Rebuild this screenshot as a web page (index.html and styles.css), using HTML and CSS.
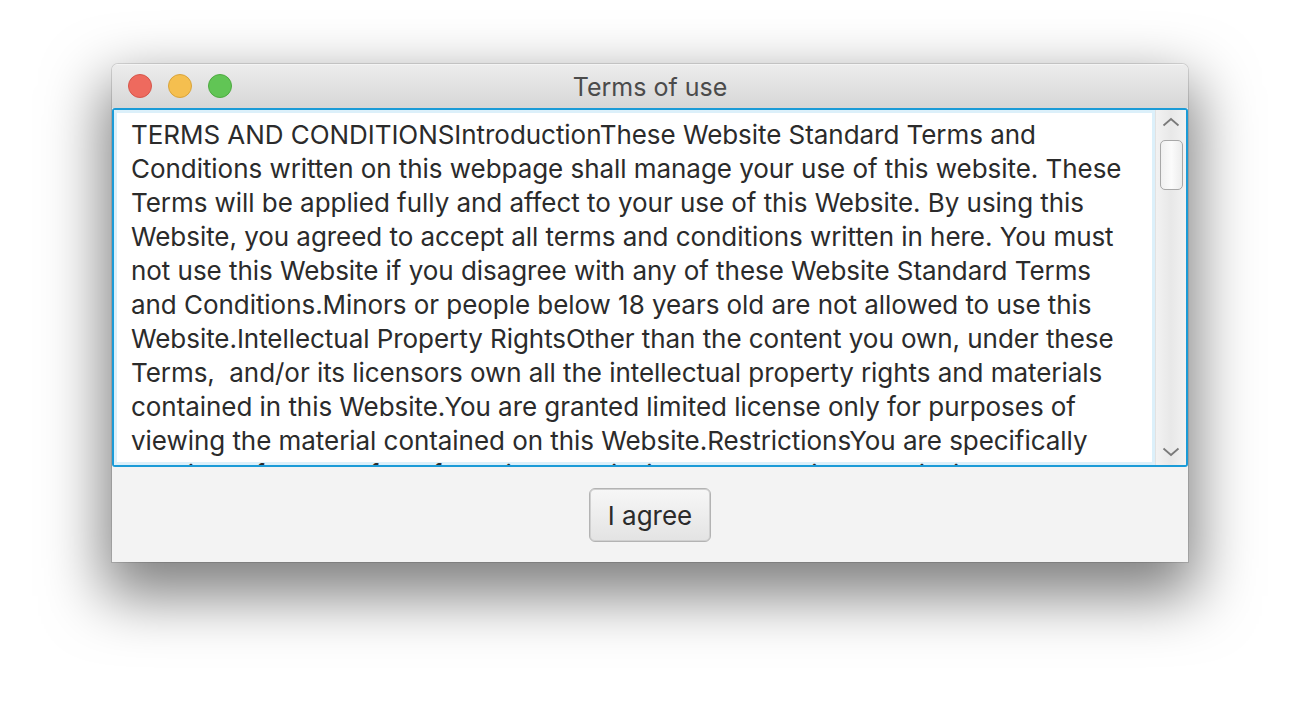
FILE: index.html
```html
<!DOCTYPE html>
<html>
<head>
<meta charset="utf-8">
<title>Terms of use</title>
<link rel="stylesheet" href="styles.css">
</head>
<body>
<div class="window">
  <div class="titlebar">
    <div class="lights">
      <span class="light red"></span>
      <span class="light yellow"></span>
      <span class="light green"></span>
    </div>
    <div class="title">Terms of use</div>
  </div>
  <div class="textarea">
    <div class="viewport">
      <div class="text">
        <span class="line">TERMS AND CONDITIONSIntroductionThese Website Standard Terms and</span>
        <span class="line">Conditions written on this webpage shall manage your use of this website. These</span>
        <span class="line">Terms will be applied fully and affect to your use of this Website. By using this</span>
        <span class="line">Website, you agreed to accept all terms and conditions written in here. You must</span>
        <span class="line">not use this Website if you disagree with any of these Website Standard Terms</span>
        <span class="line">and Conditions.Minors or people below 18 years old are not allowed to use this</span>
        <span class="line">Website.Intellectual Property RightsOther than the content you own, under these</span>
        <span class="line">Terms,&nbsp; and/or its licensors own all the intellectual property rights and materials</span>
        <span class="line">contained in this Website.You are granted limited license only for purposes of</span>
        <span class="line">viewing the material contained on this Website.RestrictionsYou are specifically</span>
        <span class="line">restricted from all of the following: publishing any Website material in any other</span>
      </div>
    </div>
    <div class="scrollbar">
      <svg class="arrow" width="18" height="10" viewBox="0 0 18 10"><path d="M1.5 8.5 L9 2 L16.5 8.5" fill="none" stroke="#7a7a7a" stroke-width="1.8"/></svg>
      <div class="thumb"></div>
      <div class="track-space"></div>
      <svg class="arrow" width="18" height="10" viewBox="0 0 18 10"><path d="M1.5 1.5 L9 8 L16.5 1.5" fill="none" stroke="#7a7a7a" stroke-width="1.8"/></svg>
    </div>
  </div>
  <div class="footer">
    <button class="btn">I agree</button>
  </div>
</div>
</body>
</html>
```
FILE: styles.css
```css
html, body {
  margin: 0;
  padding: 0;
  background: #ffffff;
  height: 100%;
}
body {
  font-family: "Inter", "Liberation Sans", sans-serif;
  color: #2b2b2b;
  overflow: hidden;
  padding-top: 64px;
  box-sizing: border-box;
}
.window {
  margin: 0 0 0 112px;
  width: 1076px;
  height: 498px;
  border-radius: 6px 6px 0 0;
  background: #f3f3f3;
  box-shadow: 0 26px 60px 8px rgba(0,0,0,0.5), 0 0 0 1px rgba(0,0,0,0.12);
  display: flex;
  flex-direction: column;
  overflow: hidden;
}
.titlebar {
  height: 44px;
  flex: none;
  background: linear-gradient(#ececec, #d7d7d7);
  border-top: 1px solid #f4f4f4;
  box-sizing: border-box;
  display: flex;
  align-items: center;
  position: relative;
}
.lights {
  display: flex;
  gap: 16px;
  padding-left: 16px;
  margin-top: -1px;
}
.light {
  width: 24px;
  height: 24px;
  border-radius: 50%;
  box-sizing: border-box;
}
.red { background: #ee6a5e; border: 1px solid #d6564b; }
.yellow { background: #f5bf4f; border: 1px solid #d9a43b; }
.green { background: #61c555; border: 1px solid #4eaa41; }
.title {
  position: absolute;
  left: 0;
  right: 0;
  top: 0;
  bottom: 0;
  display: flex;
  align-items: center;
  justify-content: center;
  font-size: 25px;
  color: #4b4b4b;
}
.textarea {
  height: 359px;
  flex: none;
  border: 2px solid #1b9bd7;
  border-radius: 3px;
  box-sizing: border-box;
  display: flex;
  overflow: hidden;
}
.viewport {
  flex: 1;
  background: #ffffff;
  box-shadow: inset 0 0 0 3px #dcf0fa;
  overflow: hidden;
  padding: 8px 0 0 17px;
}
.text {
  font-size: 26px;
  letter-spacing: -0.05px;
  line-height: 34px;
  white-space: nowrap;
}
.line {
  display: block;
}
.scrollbar {
  width: 31px;
  flex: none;
  background: linear-gradient(to right, #f2f2f2, #e8e8e8 50%, #f2f2f2);
  border-left: 1px solid #e2e2e2;
  display: flex;
  flex-direction: column;
  align-items: center;
  padding: 7px 0 8px;
  box-sizing: border-box;
}
.arrow {
  flex: none;
}
.thumb {
  margin-top: 13px;
  width: 23px;
  height: 50px;
  box-sizing: border-box;
  border: 1px solid #a8a8a8;
  border-radius: 5px;
  background: linear-gradient(to right, #f0f0f0, #fbfbfb 50%, #ececec);
}
.track-space {
  flex: 1;
}
.footer {
  flex: 1;
  display: flex;
  justify-content: center;
  padding-top: 21px;
}
.btn {
  width: 122px;
  height: 54px;
  box-sizing: border-box;
  border: 1px solid #b3b3b3;
  border-radius: 6px;
  background: linear-gradient(#f7f7f7, #e3e3e3);
  box-shadow: inset 0 0 0 1px #d0d0d0;
  font-family: "Inter", "Liberation Sans", sans-serif;
  font-size: 26px;
  color: #2b2b2b;
  padding: 0;
}
```
